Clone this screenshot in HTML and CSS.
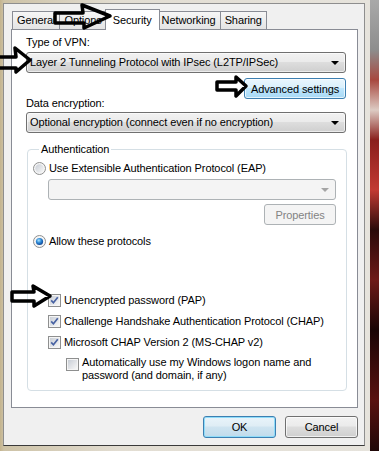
FILE: index.html
```html
<!DOCTYPE html>
<html lang="en">
<head>
  <meta charset="UTF-8" />
  <title>VPN Connection Properties</title>
  <link rel="stylesheet" href="styles.css">
</head>
<body>
  <div class="screen">
    <svg class="defs" width="0" height="0">
      <defs>
        <linearGradient id="boxFill" x1="0" y1="0" x2="1" y2="1">
          <stop offset="0" stop-color="#c9ced6"/>
          <stop offset="1" stop-color="#f7f7f7"/>
        </linearGradient>
        <radialGradient id="dotFill" cx="0.4" cy="0.35" r="0.7">
          <stop offset="0" stop-color="#a8e4ff"/>
          <stop offset="0.5" stop-color="#2b86d4"/>
          <stop offset="1" stop-color="#0c3c8c"/>
        </radialGradient>
        <symbol id="radio-off" viewBox="0 0 13 13">
          <circle cx="6.5" cy="6.5" r="6" fill="#f5f5f5" stroke="#8e8f8f"/>
          <circle cx="6.5" cy="6.5" r="4.2" fill="url(#boxFill)"/>
        </symbol>
        <symbol id="radio-on" viewBox="0 0 13 13">
          <circle cx="6.5" cy="6.5" r="6" fill="#f5f5f5" stroke="#8e8f8f"/>
          <circle cx="6.5" cy="6.5" r="3.6" fill="url(#dotFill)"/>
        </symbol>
        <symbol id="check-on" viewBox="0 0 13 13">
          <rect x="0.5" y="0.5" width="12" height="12" fill="#f5f5f5" stroke="#8e8f8f"/>
          <rect x="2" y="2" width="9" height="9" fill="url(#boxFill)"/>
          <path d="M3.2 6.4 L5.4 8.8 L9.8 3.2" fill="none" stroke="#4862a3" stroke-width="1.7"/>
        </symbol>
        <symbol id="check-off" viewBox="0 0 13 13">
          <rect x="0.5" y="0.5" width="12" height="12" fill="#f5f5f5" stroke="#8e8f8f"/>
          <rect x="2" y="2" width="9" height="9" fill="url(#boxFill)"/>
        </symbol>
      </defs>
    </svg>

    <div class="frame">
      <div class="dialog">
        <div class="tabs">
          <span class="tab">General</span>
          <span class="tab">Options</span>
          <span class="tab active">Security</span>
          <span class="tab">Networking</span>
          <span class="tab">Sharing</span>
        </div>

        <div class="panel">
          <div class="field-label">Type of VPN:</div>
          <div class="select">Layer 2 Tunneling Protocol with IPsec (L2TP/IPSec)<span class="caret"></span></div>
          <div class="row-end">
            <button class="btn btn-hot btn-advanced">Advanced settings</button>
          </div>

          <div class="field-label label-tight">Data encryption:</div>
          <div class="select select-tight">Optional encryption (connect even if no encryption)<span class="caret"></span></div>

          <fieldset class="group">
            <legend>Authentication</legend>
            <label class="option option-first">
              <svg class="mark"><use href="#radio-off"/></svg>
              <span>Use Extensible Authentication Protocol (EAP)</span>
            </label>
            <div class="select select-disabled"><span class="caret"></span></div>
            <div class="row-end">
              <button class="btn btn-disabled btn-props">Properties</button>
            </div>
            <label class="option option-allow">
              <svg class="mark"><use href="#radio-on"/></svg>
              <span>Allow these protocols</span>
            </label>

            <div class="protocols">
              <label class="option option-pap">
                <svg class="mark"><use href="#check-on"/></svg>
                <span>Unencrypted password (PAP)</span>
              </label>
              <label class="option">
                <svg class="mark"><use href="#check-on"/></svg>
                <span>Challenge Handshake Authentication Protocol (CHAP)</span>
              </label>
              <label class="option">
                <svg class="mark"><use href="#check-on"/></svg>
                <span>Microsoft CHAP Version 2 (MS-CHAP v2)</span>
              </label>
              <label class="option option-sub">
                <svg class="mark"><use href="#check-off"/></svg>
                <span>Automatically use my Windows logon name and<br>password (and domain, if any)</span>
              </label>
            </div>
          </fieldset>
        </div>

        <div class="dialog-actions">
          <button class="btn btn-default">OK</button>
          <button class="btn">Cancel</button>
        </div>
      </div>
    </div>
    <div class="photo"></div>

    <!-- hand-drawn pointers over the screenshot -->
    <svg class="marks" width="379" height="451">
      <g fill="none" stroke="#000" stroke-width="3.5" stroke-linejoin="round">
        <polygon points="55,13 83,13 82,5 110,16 84,28 84,23 55,23"/>
        <polygon points="-5,57 16,57 15,48 30,60 16,72 16,68 -5,68"/>
        <polygon points="217,82 236,82 236,77 246,86 236,96 236,90 217,90"/>
        <polygon points="12,292 34,292 33,286 50,296 34,306 34,301 12,301"/>
      </g>
    </svg>
  </div>
</body>
</html>
```

FILE: styles.css
```css
body {
  margin: 0;
  font-family: "Liberation Sans", Arial, sans-serif;
  font-size: 11px;
  letter-spacing: -0.1px;
  color: #000;
}
.screen {
  position: relative;
  display: flex;
  width: 379px;
  height: 451px;
  overflow: hidden;
}
.defs {
  position: absolute;
  width: 0;
  height: 0;
}
.frame {
  display: flex;
  width: 370px;
  box-sizing: border-box;
  padding: 3px 5px 5px 3px;
  background: linear-gradient(to right, #c4b48e 0, #cdc2a6 4px, #e2ddd2 120px, #e6e3dc 100%);
}
.photo {
  flex: 1;
  background: linear-gradient(to bottom, #a9a9a9 0, #8d8d8d 50px, #a8483f 80px, #ddcbc3 110px, #8a1f1c 140px, #c23a33 190px, #2a0a0a 230px, #6e1a18 280px, #1a0505 330px, #5a1210 400px, #200808 451px);
}
.dialog {
  flex: 1;
  display: flex;
  flex-direction: column;
  background: #f0f0f0;
  border: 1px solid #8e8e8e;
  border-bottom-color: #3a3a3a;
}
.tabs {
  display: flex;
  align-items: flex-end;
  height: 25px;
  padding-left: 9px;
  position: relative;
  z-index: 1;
}
.tab {
  height: 18px;
  line-height: 17px;
  box-sizing: border-box;
  padding: 0 4px;
  margin-left: -1px;
  border: 1px solid #898c95;
  border-bottom: none;
  background: linear-gradient(#f6f6f6, #e4e4e4);
}
.tab.active {
  height: 21px;
  line-height: 20px;
  margin: 0 -2px -1px -2px;
  padding: 0 7px;
  background: #fff;
  position: relative;
}
.panel {
  height: 379px;
  box-sizing: border-box;
  margin: 0 6px 0 7px;
  padding: 5px 11px 0 14px;
  background: #fff;
  border: 1px solid #898c95;
}
.field-label {
  line-height: 14px;
}
.label-tight {
  margin-top: -3px;
}
.select {
  position: relative;
  height: 21px;
  line-height: 19px;
  box-sizing: border-box;
  margin-top: 3px;
  padding-left: 3px;
  border: 1px solid #707070;
  border-radius: 3px;
  background: linear-gradient(#f2f2f2 0, #ebebeb 45%, #dddddd 50%, #cfcfcf 100%);
  box-shadow: inset 0 0 0 1px rgba(255, 255, 255, 0.6);
}
.select-tight {
  margin-top: 2px;
}
.caret {
  position: absolute;
  right: 6px;
  top: 8px;
  border-left: 4px solid transparent;
  border-right: 4px solid transparent;
  border-top: 4px solid #000;
}
.select-disabled {
  margin: 4px 0 0 15px;
  border-color: #adb2b5;
  background: #f4f4f4;
  box-shadow: none;
}
.select-disabled .caret {
  border-top-color: #a5a5a5;
}
.row-end {
  display: flex;
  justify-content: flex-end;
}
.btn {
  height: 21px;
  box-sizing: border-box;
  padding: 0;
  font: inherit;
  letter-spacing: inherit;
  color: #000;
  border: 1px solid #707070;
  border-radius: 3px;
  background: linear-gradient(#f2f2f2 0, #ebebeb 45%, #dddddd 50%, #cfcfcf 100%);
  box-shadow: inset 0 0 0 1px rgba(255, 255, 255, 0.7);
}
.btn-advanced {
  width: 102px;
  margin-top: 5px;
}
.btn-hot {
  border-color: #3c7fb1;
  background: linear-gradient(#eaf6fd 0, #d9f0fc 45%, #bee6fd 50%, #a7d9f5 100%);
}
.btn-default {
  border-color: #3c7fb1;
  background: linear-gradient(#e9f4fa 0, #dfedf5 45%, #cfe4f0 50%, #c0dbeb 100%);
  box-shadow: inset 0 0 0 1px #8fdcf9;
}
.btn-disabled {
  color: #838383;
  border-color: #adb2b5;
  background: #f4f4f4;
  box-shadow: none;
}
.btn-props {
  width: 72px;
  margin-top: 4px;
}
.group {
  margin: 9px -1px 0 1px;
  padding: 0 10px 8px 5px;
  border: 1px solid #d5dfe5;
  border-radius: 4px;
  min-width: 0;
}
.group legend {
  margin-left: 6px;
  padding: 0 2px;
  line-height: 14px;
}
.option {
  display: flex;
  align-items: center;
  gap: 3px;
  line-height: 14px;
  margin-top: 7px;
}
.mark {
  flex: none;
  width: 13px;
  height: 13px;
}
.option-first {
  margin-top: 5px;
}
.option-allow {
  margin-top: 9px;
}
.protocols {
  padding-left: 15px;
}
.option-pap {
  margin-top: 45px;
}
.option-sub {
  align-items: flex-start;
  line-height: 13px;
  padding-left: 18px;
}
.option-sub .mark {
  margin-top: 2px;
}
.dialog-actions {
  display: flex;
  justify-content: flex-end;
  gap: 9px;
  margin: 8px 6px 0 0;
}
.dialog-actions .btn {
  width: 73px;
  height: 22px;
}
.marks {
  position: absolute;
  left: 0;
  top: 0;
  z-index: 2;
  pointer-events: none;
}
```
